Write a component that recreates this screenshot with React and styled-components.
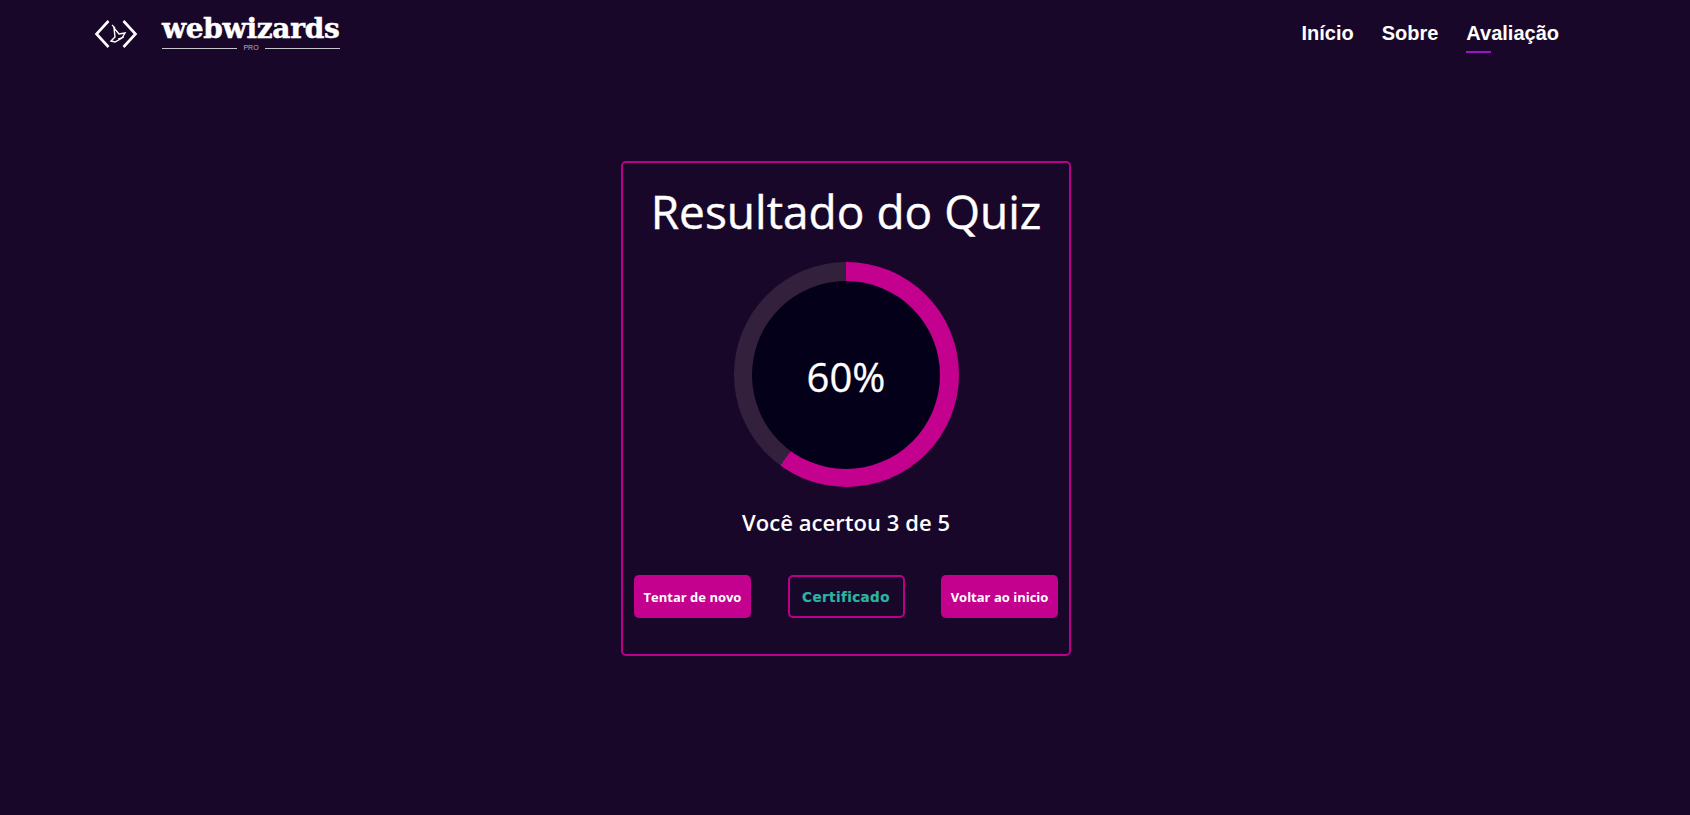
import React from 'react';
import styled, { createGlobalStyle } from 'styled-components';

const GlobalStyle = createGlobalStyle`
    html, body {
        margin: 0;
        background-color: #190729;
    }
    * {
        box-sizing: border-box;
    }
`

const Page = styled.div`
    min-height: 815px;
    background-color: #190729;
    overflow: hidden;
`
const Header = styled.header`
    display: flex;
    justify-content: space-between;
    align-items: flex-start;
    height: 161px;
    padding: 16px 131px 0 94px;
`
const Logo = styled.div`
    display: flex;
    align-items: flex-start;
    gap: 24px;
`
const LogoIcon = styled.svg`
    width: 44px;
    height: 30px;
    margin-top: 3px;
`
const Brand = styled.div`
    display: flex;
    flex-direction: column;
    width: 178px;
`
const BrandName = styled.span`
    margin-top: -1px;
    font-family: "DejaVu Serif", serif;
    font-weight: 700;
    font-size: 28px;
    line-height: 28px;
    letter-spacing: -0.3px;
    color: #fff;
    white-space: nowrap;
    -webkit-text-stroke: 0.5px #fff;
`
const BrandTier = styled.div`
    display: flex;
    align-items: center;
    gap: 6px;
    margin-top: 1px;
    font-family: "Liberation Sans", Arial, sans-serif;
    font-size: 7px;
    line-height: 8px;
    color: #b9b2c0;

    &::before, &::after {
        content: "";
        flex: 1;
        height: 1px;
        background-color: #c9c5cf;
    }
`
const Nav = styled.nav`
    display: flex;
    gap: 28px;
`
const NavLink = styled.a`
    position: relative;
    font-family: "Liberation Sans", Arial, sans-serif;
    font-weight: 700;
    font-size: 20px;
    line-height: 34px;
    color: #fff;
    cursor: pointer;

    ${props => props.$active && `
        &::after {
            content: "";
            position: absolute;
            left: 0;
            bottom: -3px;
            width: 25px;
            height: 2px;
            background-color: #9c12c4;
        }
    `}
`
const Main = styled.main`
    display: flex;
    justify-content: center;
    padding-left: 2px;
`
const Card = styled.section`
    display: flex;
    flex-direction: column;
    align-items: center;
    width: 450px;
    height: 495px;
    padding: 19px 11px 0;
    border: 2px solid #b8008a;
    border-radius: 5px;
`
const Title = styled.h1`
    margin: 0;
    font-family: "Open Sans", "Noto Sans", sans-serif;
    font-weight: 400;
    font-size: 46px;
    line-height: 58px;
    color: #fff;
    white-space: nowrap;
    -webkit-text-stroke: 0.4px #fff;
`
const Ring = styled.div`
    display: flex;
    justify-content: center;
    align-items: center;
    width: 225px;
    height: 225px;
    margin-top: 22px;
    border-radius: 50%;
    background: conic-gradient(#c4008f 0 ${props => props.$value}%, #33203c ${props => props.$value}% 100%);
`
const RingInner = styled.div`
    display: flex;
    justify-content: center;
    align-items: center;
    width: 188px;
    height: 188px;
    padding-top: 4px;
    border-radius: 50%;
    background-color: #04001a;
    font-family: "Open Sans", "Noto Sans", sans-serif;
    font-size: 40px;
    color: #fff;
    -webkit-text-stroke: 0.3px #fff;
`
const Score = styled.p`
    margin: 20px 0 0;
    font-family: "Open Sans", "Noto Sans", sans-serif;
    font-weight: 600;
    font-size: 22px;
    line-height: 30px;
    letter-spacing: 0.05px;
    color: #fff;
`
const Actions = styled.div`
    display: flex;
    justify-content: space-between;
    width: 100%;
    margin-top: 38px;
`
const Button = styled.button`
    width: 117px;
    height: 43px;
    padding: 0;
    border: 0;
    border-radius: 5px;
    background-color: #c4008f;
    font-family: "Open Sans", "Noto Sans", sans-serif;
    font-weight: 700;
    font-size: 13px;
    color: #fff;
    cursor: pointer;
`
const OutlineButton = styled(Button)`
    border: 2px solid #b8008a;
    background-color: transparent;
    font-family: "DejaVu Sans", sans-serif;
    font-size: 13.5px;
    letter-spacing: 0.4px;
    color: #2ab5a0;
    -webkit-text-stroke: 0.2px #2ab5a0;
`

const App = () => {
    return (
        <>
            <GlobalStyle />
            <Page>
                <Header>
                    <Logo>
                        <LogoIcon viewBox="0 0 44 30">
                            <path d="M14.5 2 L2.5 15 L14.5 28" fill="none" stroke="#fff" strokeWidth="2.6" />
                            <path d="M29.5 2 L41.5 15 L29.5 28" fill="none" stroke="#fff" strokeWidth="2.6" />
                            <path d="M17 22 L21 18 L20 9 L25 15 L31 14 L28 19 L21 23 Z" fill="none" stroke="#fff" strokeWidth="1.4" />
                            <path d="M18 6 L21 9 M24 20 L30 18" stroke="#fff" strokeWidth="1.2" />
                        </LogoIcon>
                        <Brand>
                            <BrandName>webwizards</BrandName>
                            <BrandTier>PRO</BrandTier>
                        </Brand>
                    </Logo>
                    <Nav>
                        <NavLink>Início</NavLink>
                        <NavLink>Sobre</NavLink>
                        <NavLink $active>Avaliação</NavLink>
                    </Nav>
                </Header>
                <Main>
                    <Card>
                        <Title>Resultado do Quiz</Title>
                        <Ring $value={60}>
                            <RingInner>60%</RingInner>
                        </Ring>
                        <Score>Você acertou 3 de 5</Score>
                        <Actions>
                            <Button>Tentar de novo</Button>
                            <OutlineButton>Certificado</OutlineButton>
                            <Button>Voltar ao inicio</Button>
                        </Actions>
                    </Card>
                </Main>
            </Page>
        </>
    )
}

export default App
